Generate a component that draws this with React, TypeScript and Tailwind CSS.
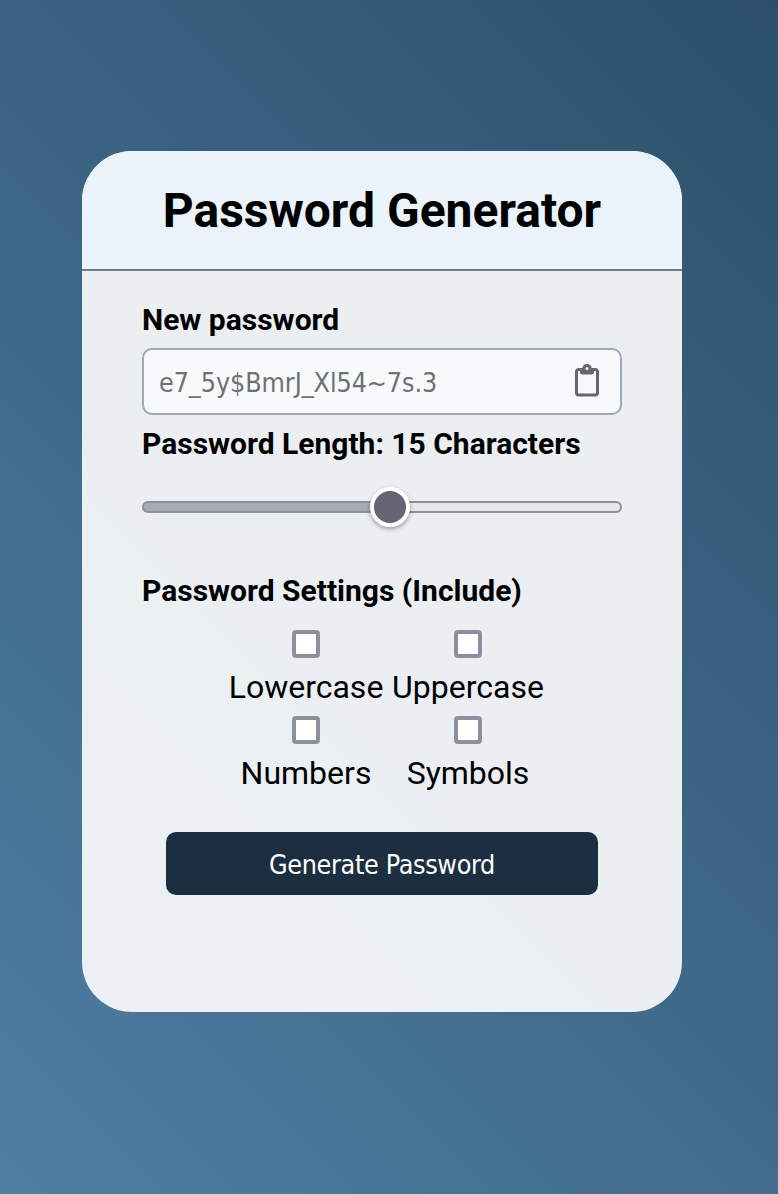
import React from 'react';

function ClipboardIcon() {
  return (
    <svg width="26" height="34" viewBox="0 0 26 34" fill="none" className="-mt-1 text-[#65676b]">
      <path
        d="M7 6.500H4.700a2.200 2.200 0 0 0-2.200 2.200v21.100A2.200 2.200 0 0 0 4.700 32h16.600a2.200 2.200 0 0 0 2.200-2.200V8.700a2.200 2.200 0 0 0-2.200-2.200H19"
        stroke="currentColor"
        strokeWidth="3"
      />
      <path
        fill="currentColor"
        fillRule="evenodd"
        d="M6 5h2.300C8.800 2.600 10.500 1 13 1s4.200 1.600 4.700 4H20v4a2.500 2.500 0 0 1-2.500 2.500h-9A2.500 2.500 0 0 1 6 9V5Zm7-.9a1.500 1.500 0 1 0 0 3 1.500 1.500 0 0 0 0-3Z"
      />
    </svg>
  );
}

function Option({ label }: { label: string }) {
  return (
    <label className="flex h-[86px] flex-col items-center">
      <input
        type="checkbox"
        className="h-7 w-7 shrink-0 appearance-none rounded-[4px] border-4 border-[#8f8e9e] bg-white"
      />
      <span className="mt-2.5 whitespace-nowrap text-[32px] leading-[38px]">{label}</span>
    </label>
  );
}

export default function App() {
  return (
    <main className="h-[1194px] w-[778px] bg-[linear-gradient(45deg,#4f7ea2,#2c506b)] pl-[82px] pt-[151px] font-['Roboto',sans-serif] text-black">
      <section className="h-[861px] w-[600px] overflow-hidden rounded-[50px] bg-[#f9fafb]/93">
        <header className="flex h-[120px] items-center justify-center border-b-2 border-[#6b7b8b] bg-[#eaf2fa]">
          <h1 className="whitespace-nowrap pt-0.5 text-[48px] font-bold leading-[56px]">Password Generator</h1>
        </header>
        <div className="flex flex-col px-[60px] pt-[31px]">
          <h2 className="text-[30px] font-bold leading-[36px]">New password</h2>
          <div className="mt-[10px] flex h-[67px] items-center justify-between rounded-[10px] border-2 border-[#a0a8b0] bg-white/60 pl-[15px] pr-[20px]">
            <span className="pt-0.5 font-['DejaVu_Sans_Condensed','DejaVu_Sans',sans-serif] text-[26.67px] tracking-[-0.08px] text-[#6f7072] [font-stretch:condensed]">
              e7_5y$BmrJ_Xl54~7s.3
            </span>
            <ClipboardIcon />
          </div>
          <h2 className="mt-[11px] whitespace-nowrap text-[30px] font-bold leading-[36px]">Password Length: 15 Characters</h2>
          <div className="mt-[25px] flex h-10 items-center">
            <div className="h-3 w-[238px] rounded-l-[6px] border-2 border-r-0 border-[#8b9297] bg-[#a5adb2]" />
            <div className="z-10 -mx-[10px] h-10 w-10 shrink-0 rounded-full border-4 border-white bg-[#666472] shadow-[0_2px_4px_rgba(0,0,0,0.35)]" />
            <div className="h-3 grow rounded-r-[6px] border-2 border-l-0 border-[#8f8e9b] bg-[#e8e8ec]" />
          </div>
          <h2 className="mt-[46px] text-[30px] font-bold leading-[36px]">Password Settings (Include)</h2>
          <div className="mt-[21px] grid grid-cols-[162px_162px] pl-[83px]">
            <Option label="Lowercase" />
            <Option label="Uppercase" />
            <Option label="Numbers" />
            <Option label="Symbols" />
          </div>
          <button className="mx-6 mt-[30px] h-[63px] rounded-[10px] bg-[#1b2f40] pt-0.5 font-['DejaVu_Sans_Condensed','DejaVu_Sans',sans-serif] text-[26.67px] tracking-[-0.33px] text-white [font-stretch:condensed]">
            Generate Password
          </button>
        </div>
      </section>
    </main>
  );
}
